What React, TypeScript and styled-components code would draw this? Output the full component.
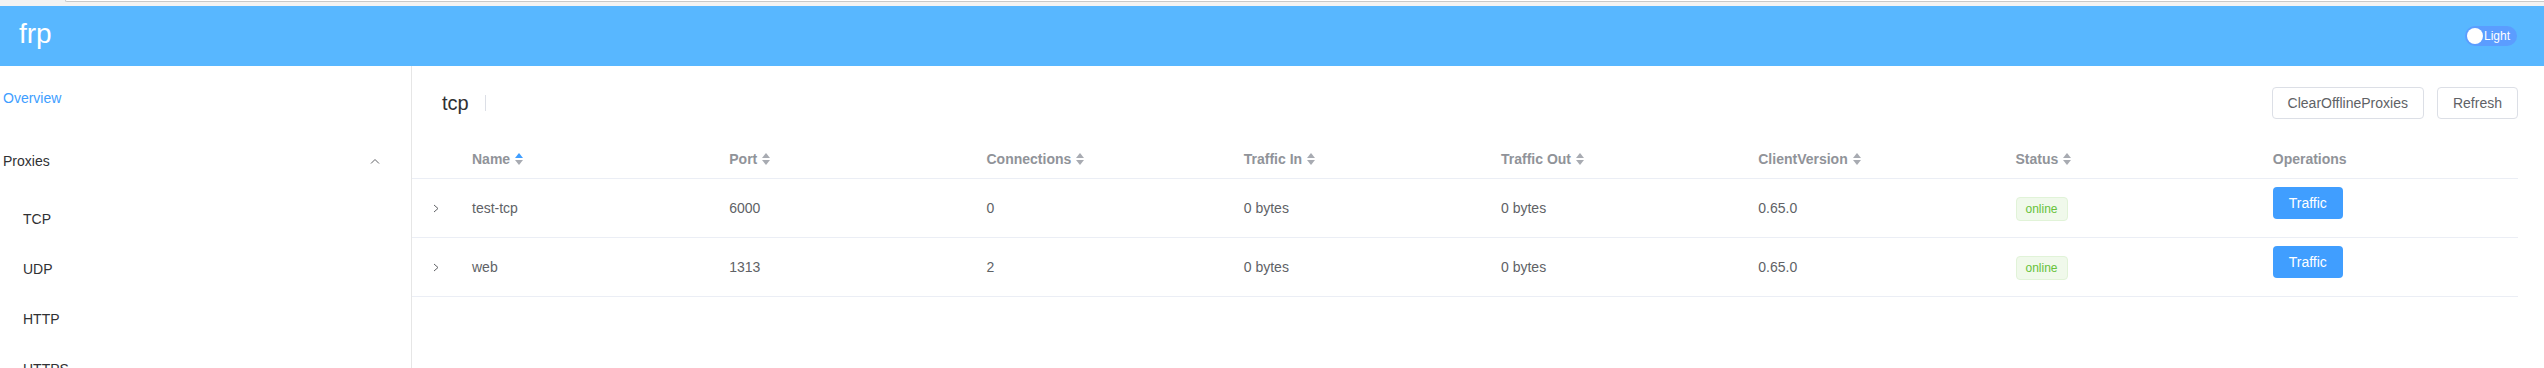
import styled, { createGlobalStyle } from "styled-components";

const GlobalStyle = createGlobalStyle`
  html, body {
    margin: 0;
    padding: 0;
    background: #fff;
    font-family: "Liberation Sans", Arial, sans-serif;
    overflow: hidden;
  }
  * {
    box-sizing: border-box;
  }
`;

const TopStrip = styled.div`
  height: 6px;
  background: #f3f3f3;
`;

const TabEdge = styled.div`
  margin-left: 65px;
  height: 2px;
  background: #fff;
  border-bottom: 1px solid #c9c9c9;
  border-left: 1px solid #c9c9c9;
  border-bottom-left-radius: 4px;
`;

const Header = styled.header`
  height: 60px;
  background: #58b7ff;
  display: flex;
  align-items: center;
  justify-content: space-between;
  padding: 0 27px 0 19px;
`;

const Logo = styled.span`
  color: #fff;
  font-size: 28px;
  line-height: 1;
  margin-top: -4px;
`;

const ThemeSwitch = styled.div`
  width: 52px;
  height: 20px;
  border-radius: 10px;
  background: #5b9dff;
  display: flex;
  align-items: center;
  padding: 0 2px;
  gap: 1px;
`;

const Knob = styled.span`
  width: 16px;
  height: 16px;
  border-radius: 50%;
  background: #fff;
`;

const SwitchLabel = styled.span`
  color: #fff;
  font-size: 12px;
`;

const Body = styled.div`
  display: flex;
  height: 302px;
  overflow: hidden;
`;

const Sidebar = styled.nav`
  width: 412px;
  flex-shrink: 0;
  border-right: 1px solid #e6e6e6;
`;

const MenuItem = styled.div<{ $active?: boolean }>`
  height: 64px;
  display: flex;
  align-items: center;
  padding-left: 3px;
  font-size: 14px;
  color: ${(p) => (p.$active ? "#409eff" : "#303133")};
`;

const SubmenuTitle = styled.div`
  height: 64px;
  display: flex;
  align-items: center;
  justify-content: space-between;
  padding: 0 31px 2px 3px;
  font-size: 14px;
  color: #303133;
`;

const SubItem = styled.div`
  height: 50px;
  flex-shrink: 0;
  display: flex;
  align-items: center;
  padding-left: 23px;
  font-size: 14px;
  color: #303133;
`;

const Main = styled.main`
  flex: 1;
  padding: 21px 26px 0 0;
`;

const TopBar = styled.div`
  height: 32px;
  display: flex;
  align-items: center;
  justify-content: space-between;
  padding-left: 30px;
`;

const TitleGroup = styled.div`
  display: flex;
  align-items: center;
`;

const Title = styled.span`
  font-size: 20px;
  color: #303133;
`;

const Divider = styled.span`
  width: 1px;
  height: 16px;
  background: #dcdfe6;
  margin-left: 16px;
`;

const Actions = styled.div`
  display: flex;
  gap: 13px;
`;

const PlainButton = styled.button`
  height: 32px;
  padding: 0 15px;
  border: 1px solid #dcdfe6;
  border-radius: 4px;
  background: #fff;
  color: #606266;
  font-family: inherit;
  font-size: 14px;
`;

const Table = styled.div`
  margin-top: 21px;
`;

const Row = styled.div<{ $head?: boolean }>`
  display: grid;
  grid-template-columns: 48px repeat(8, 1fr);
  height: ${(p) => (p.$head ? "39px" : "59px")};
  border-bottom: 1px solid #ebeef5;
`;

const Cell = styled.div<{ $head?: boolean }>`
  display: flex;
  align-items: center;
  padding-left: 12px;
  font-size: 14px;
  font-weight: ${(p) => (p.$head ? 700 : 400)};
  color: ${(p) => (p.$head ? "#909399" : "#606266")};
`;

const ExpandCell = styled.div`
  display: flex;
  align-items: center;
  justify-content: center;
  color: #606266;
`;

const OpsCell = styled(Cell)`
  align-items: flex-start;
  padding-top: 8px;
`;

const SortCaret = styled.span`
  display: inline-flex;
  flex-direction: column;
  gap: 2px;
  margin-left: 5px;
`;

const Caret = styled.i<{ $dir: "up" | "down"; $on?: boolean }>`
  width: 0;
  height: 0;
  border-left: 4px solid transparent;
  border-right: 4px solid transparent;
  ${(p) =>
    p.$dir === "up"
      ? `border-bottom: 5px solid ${p.$on ? "#409eff" : "#a8abb2"};`
      : `border-top: 5px solid ${p.$on ? "#409eff" : "#a8abb2"};`}
`;

const Tag = styled.span`
  height: 24px;
  padding: 0 9px;
  display: inline-flex;
  align-items: center;
  border: 1px solid #e1f3d8;
  background: #f0f9eb;
  color: #67c23a;
  border-radius: 4px;
  font-size: 12px;
  margin-top: 2px;
`;

const PrimaryButton = styled.button`
  width: 70px;
  height: 32px;
  border: none;
  border-radius: 4px;
  background: #409eff;
  color: #fff;
  font-family: inherit;
  font-size: 14px;
`;

const proxies = [
  { name: "test-tcp", port: 6000, conns: 0, tin: "0 bytes", tout: "0 bytes", version: "0.65.0" },
  { name: "web", port: 1313, conns: 2, tin: "0 bytes", tout: "0 bytes", version: "0.65.0" },
];

const columns = ["Name", "Port", "Connections", "Traffic In", "Traffic Out", "ClientVersion", "Status"];

function Sort({ active }: { active?: boolean }) {
  return (
    <SortCaret>
      <Caret $dir="up" $on={active} />
      <Caret $dir="down" />
    </SortCaret>
  );
}

function App() {
  return (
    <>
      <GlobalStyle />
      <TopStrip>
        <TabEdge />
      </TopStrip>
      <Header>
        <Logo>frp</Logo>
        <ThemeSwitch>
          <Knob />
          <SwitchLabel>Light</SwitchLabel>
        </ThemeSwitch>
      </Header>
      <Body>
        <Sidebar>
          <MenuItem $active>Overview</MenuItem>
          <SubmenuTitle>
            Proxies
            <svg width="10" height="6" viewBox="0 0 10 6">
              <polyline points="1,5.5 5,1.5 9,5.5" fill="none" stroke="#606266" strokeWidth="1" />
            </svg>
          </SubmenuTitle>
          <SubItem>TCP</SubItem>
          <SubItem>UDP</SubItem>
          <SubItem>HTTP</SubItem>
          <SubItem>HTTPS</SubItem>
        </Sidebar>
        <Main>
          <TopBar>
            <TitleGroup>
              <Title>tcp</Title>
              <Divider />
            </TitleGroup>
            <Actions>
              <PlainButton>ClearOfflineProxies</PlainButton>
              <PlainButton>Refresh</PlainButton>
            </Actions>
          </TopBar>
          <Table>
            <Row $head>
              <ExpandCell />
              {columns.map((c, i) => (
                <Cell $head key={c}>
                  {c}
                  <Sort active={i === 0} />
                </Cell>
              ))}
              <Cell $head>Operations</Cell>
            </Row>
            {proxies.map((p) => (
              <Row key={p.name}>
                <ExpandCell>
                  <svg width="6" height="9" viewBox="0 0 6 9">
                    <polyline points="1,1 5,4.5 1,8" fill="none" stroke="#606266" strokeWidth="1" />
                  </svg>
                </ExpandCell>
                <Cell>{p.name}</Cell>
                <Cell>{p.port}</Cell>
                <Cell>{p.conns}</Cell>
                <Cell>{p.tin}</Cell>
                <Cell>{p.tout}</Cell>
                <Cell>{p.version}</Cell>
                <Cell>
                  <Tag>online</Tag>
                </Cell>
                <OpsCell>
                  <PrimaryButton>Traffic</PrimaryButton>
                </OpsCell>
              </Row>
            ))}
          </Table>
        </Main>
      </Body>
    </>
  );
}

export default App;
